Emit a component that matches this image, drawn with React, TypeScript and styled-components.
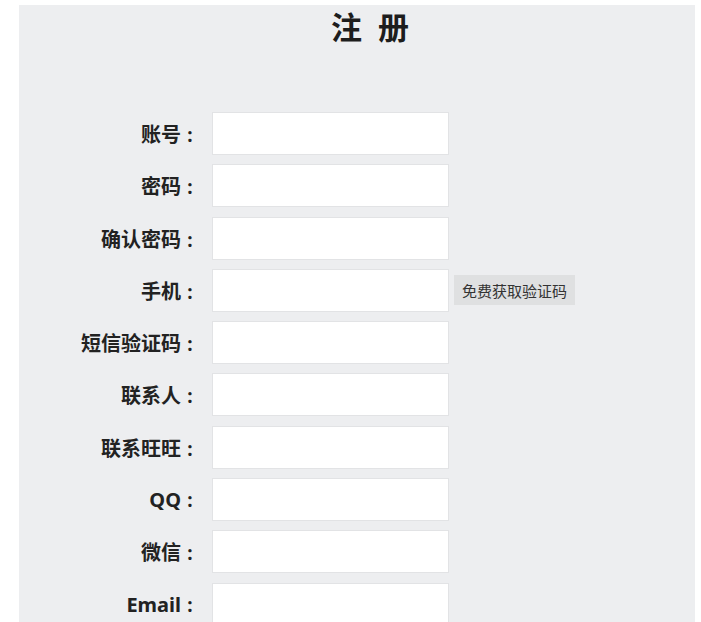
import React from "react";
import styled, { createGlobalStyle } from "styled-components";

const GlobalStyle = createGlobalStyle`
  html, body {
    margin: 0;
    padding: 0;
    background: #ffffff;
    overflow: hidden;
  }
  body {
    font-family: "Noto Sans", "Noto Sans CJK SC", sans-serif;
  }
`;

const Panel = styled.div`
  margin: 5px 0 0 19px;
  width: 676px;
  min-height: 617px;
  background: #edeef0;
  box-sizing: border-box;
`;

const Title = styled.h2`
  margin: 0;
  padding: 1px 0 0 26px;
  text-align: center;
  font-family: "Noto Sans CJK SC", sans-serif;
  font-size: 31px;
  line-height: 40px;
  font-weight: 700;
  color: #1d1d1d;
  word-spacing: 9px;
`;

const Form = styled.form`
  display: flex;
  flex-direction: column;
  gap: 9.3px;
  padding-top: 66px;
`;

const Row = styled.div`
  display: flex;
  align-items: center;
`;

const Label = styled.label`
  width: 180px;
  text-align: right;
  font-family: "Noto Sans", "Noto Sans CJK SC", sans-serif;
  font-size: 20px;
  font-weight: 700;
  color: #222;
  white-space: nowrap;
`;

const Colon = styled.span`
  display: inline-block;
  width: 18px;
  text-align: center;
  font-size: 19px;
  font-weight: 700;
  color: #222;
`;

const Field = styled.input`
  margin-left: 13px;
  width: 237px;
  height: 43px;
  box-sizing: border-box;
  border: 1px solid #e2e3e5;
  background: #ffffff;
  outline: none;
  padding: 0 8px;
  font-size: 15px;
`;

const CodeButton = styled.button`
  margin-left: 5px;
  height: 30px;
  padding: 0 8px;
  border: none;
  background: #dfe0e1;
  color: #333;
  font-family: "Noto Sans CJK SC", sans-serif;
  font-size: 15px;
  cursor: pointer;
`;

const fields = [
  { label: "账号", type: "text" },
  { label: "密码", type: "password" },
  { label: "确认密码", type: "password" },
  { label: "手机", type: "text", code: true },
  { label: "短信验证码", type: "text" },
  { label: "联系人", type: "text" },
  { label: "联系旺旺", type: "text" },
  { label: "QQ", type: "text" },
  { label: "微信", type: "text" },
  { label: "Email", type: "email" },
];

const App: React.FC = () => {
  return (
    <>
      <GlobalStyle />
      <Panel>
        <Title>注 册</Title>
        <Form onSubmit={(e) => e.preventDefault()}>
          {fields.map((f) => (
            <Row key={f.label}>
              <Label>
                {f.label}
                <Colon>:</Colon>
              </Label>
              <Field type={f.type} />
              {f.code && <CodeButton type="button">免费获取验证码</CodeButton>}
            </Row>
          ))}
        </Form>
      </Panel>
    </>
  );
};

export default App;
